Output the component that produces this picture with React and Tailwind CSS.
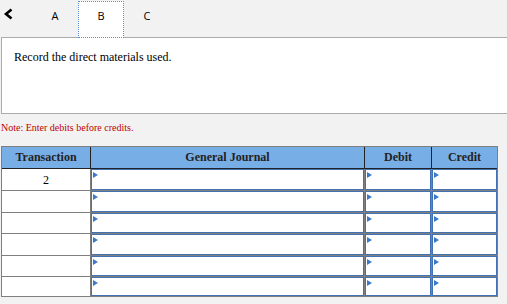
import React from 'react';

const rowHeights = ['h-[21px]', 'h-[21px]', 'h-[20px]', 'h-[21px]', 'h-[20px]', 'h-[19px]'];

const EntryCell = () => (
  <div className="relative bg-white border border-[#4372b3]">
    <span className="absolute left-px top-[2px] w-0 h-0 border-y-[3px] border-y-transparent border-l-[5px] border-l-[#3c79c9]"></span>
  </div>
);

const App = () => {
  return (
    <div className="w-[507px] h-[304px] bg-[#f2f2f2] overflow-hidden" style={{ fontFamily: '"Liberation Serif", serif' }}>
      <div className="relative z-10 h-[37px] flex items-start" style={{ fontFamily: '"Open Sans", sans-serif' }}>
        <div className="w-[32px] h-[37px] flex items-start pl-[3px] pt-[8px]">
          <svg width="10" height="12" viewBox="0 0 10 12">
            <polyline points="8.5,1.5 3,6 8.5,10.5" fill="none" stroke="#000" strokeWidth="2.6" />
          </svg>
        </div>
        <div className="w-[46px] h-[37px] flex items-center justify-center pb-[4px] text-[11px] text-black">A</div>
        <div className="w-[46px] h-[37px] mt-px flex items-center justify-center pb-[6px] text-[11px] text-black bg-white border border-dotted border-[#5b8fd3]">B</div>
        <div className="w-[46px] h-[37px] flex items-center justify-center pb-[4px] text-[11px] text-black">C</div>
      </div>

      <div className="ml-px h-[77px] bg-white border border-r-0 border-[#ababab] pl-[12px] pt-[12px]">
        <p className="text-[12px] leading-[14px] text-black">Record the direct materials used.</p>
      </div>

      <p className="mt-[8px] pl-px text-[10px] leading-[12px] text-[#c00000]">Note: Enter debits before credits.</p>

      <div className="mt-[12px] ml-px w-[497px] border border-[#7f7f7f]">
        <div className="grid grid-cols-[88px_273px_66px_65px] gap-px bg-[#222] border-b border-[#222]">
          {['Transaction', 'General Journal', 'Debit', 'Credit'].map((h) => (
            <div key={h} className="h-[21px] bg-[#78aee6] flex items-center justify-center pb-px text-[12px] font-bold text-[#222]">{h}</div>
          ))}
        </div>
        <div className="grid grid-cols-[88px_273px_66px_65px] gap-px bg-[#7f7f7f]">
          {rowHeights.map((h, i) => (
            <React.Fragment key={i}>
              <div className={`${h} bg-white flex items-center justify-center text-[12px] text-black`}>{i === 0 ? '2' : ''}</div>
              <EntryCell />
              <EntryCell />
              <EntryCell />
            </React.Fragment>
          ))}
        </div>
      </div>
    </div>
  );
};

export default App;
